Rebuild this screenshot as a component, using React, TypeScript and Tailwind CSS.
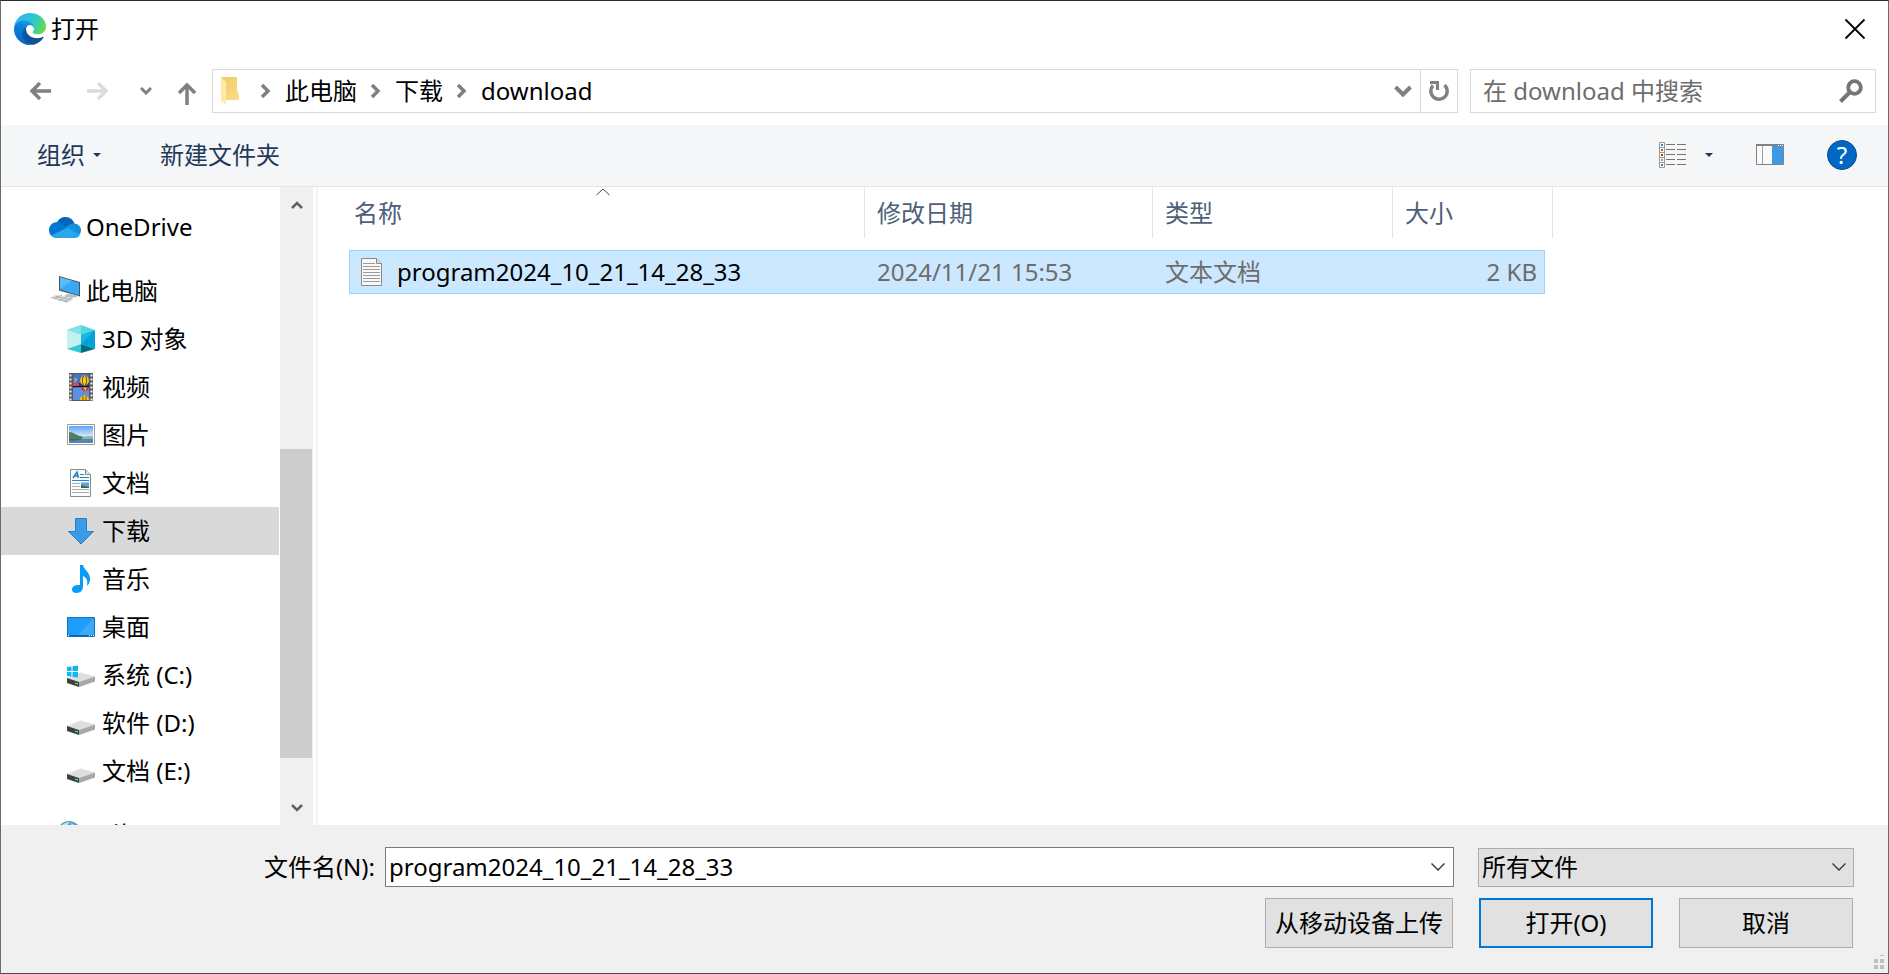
import type { ReactNode } from "react";

function EdgeLogo() {
  return (
    <svg className="size-8" viewBox="0 0 256 256" aria-hidden="true">
      <defs>
        <linearGradient id="edge-navy" x1="60" y1="177" x2="240" y2="177" gradientUnits="userSpaceOnUse">
          <stop offset="0" stopColor="#0c59a4" />
          <stop offset="1" stopColor="#114a8b" />
        </linearGradient>
        <linearGradient id="edge-blue" x1="120" y1="60" x2="50" y2="240" gradientUnits="userSpaceOnUse">
          <stop offset="0" stopColor="#1b9de2" />
          <stop offset="0.4" stopColor="#0b7fdb" />
          <stop offset="1" stopColor="#0667c8" />
        </linearGradient>
        <linearGradient id="edge-green" x1="30" y1="40" x2="240" y2="140" gradientUnits="userSpaceOnUse">
          <stop offset="0" stopColor="#35b5ef" />
          <stop offset="0.45" stopColor="#2ec2dd" />
          <stop offset="0.75" stopColor="#45d28d" />
          <stop offset="1" stopColor="#66dd46" />
        </linearGradient>
      </defs>
      <path
        fill="url(#edge-navy)"
        d="M231.07 190.54c-3.4 1.77-6.9 3.34-10.5 4.7a101.7 101.7 0 0 1-35.92 6.46c-47.34 0-88.58-32.57-88.58-74.34.12-11.41 6.43-21.85 16.46-27.28-42.82 1.8-53.82 46.42-53.82 72.55 0 73.91 68.1 81.4 82.8 81.4 7.9 0 19.84-2.3 27-4.56l1.31-.44a128.34 128.34 0 0 0 66.6-52.8 4 4 0 0 0-5.35-5.69z"
      />
      <path
        fill="url(#edge-blue)"
        d="M105.73 241.42a79.2 79.2 0 0 1-22.74-21.34 80.72 80.72 0 0 1 29.53-120c3.12-1.47 8.45-4.15 15.54-4a32.35 32.35 0 0 1 25.69 13 31.88 31.88 0 0 1 6.36 18.66c0-.2 24.46-79.6-80-79.6-43.9 0-80 41.66-80 78.2-.17 19.3 4 38.4 12.1 56a128 128 0 0 0 156.38 67.11 75.55 75.55 0 0 1-62.78-8z"
      />
      <path
        fill="url(#edge-green)"
        d="M152.33 148.86c-.8 1.05-3.3 2.5-3.3 5.65 0 2.61 1.7 5.12 4.72 7.23 14.38 10 41.49 8.68 41.56 8.68a59.56 59.56 0 0 0 30.27-8.35A61.38 61.38 0 0 0 256 109.19c.26-22.41-8-37.3-11.34-43.9C223.46 23.86 177.72 0 128 0A128 128 0 0 0 0 126.2c.48-36.54 36.8-66.05 80-66.05 3.5 0 23.46.34 42 10.07 16.34 8.58 24.9 18.94 30.85 29.2 6.18 10.67 7.28 24.15 7.28 29.52 0 5.38-2.74 13.36-7.8 19.92z"
      />
    </svg>
  );
}

function Arrow({ className, d }: { className: string; d: string }) {
  return (
    <svg className={className} viewBox="0 0 24 24" fill="none" stroke="currentColor" strokeWidth={3.5} aria-hidden="true">
      <path d={d} />
    </svg>
  );
}

// chevron between the parts of the address
function Crumb() {
  return (
    <svg className="h-4 w-3 text-[#808080]" viewBox="0 0 12 16" fill="none" stroke="currentColor" strokeWidth={3.5} aria-hidden="true">
      <path d="M2 2l6 6-6 6" />
    </svg>
  );
}

function SmallTriangle() {
  return (
    <svg className="h-1 w-2" viewBox="0 0 8 4" aria-hidden="true">
      <path d="M0 0h8L4 4z" fill="#1e395b" />
    </svg>
  );
}

function ThinChevron() {
  return (
    <svg className="h-2 w-3.5" viewBox="0 0 14 8" fill="none" stroke="#404040" strokeWidth={1.5} aria-hidden="true">
      <path d="M0.5 0.5L7 7l6.500-6.500" />
    </svg>
  );
}

function FolderIcon() {
  return (
    <svg className="h-7 w-5" viewBox="0 0 20 28" aria-hidden="true">
      <defs>
        <linearGradient id="folder" x1="0" y1="0" x2="1" y2="1">
          <stop offset="0" stopColor="#efc964" />
          <stop offset="1" stopColor="#fbdf85" />
        </linearGradient>
      </defs>
      <path d="M1 0h16v14l2 3v6H6z" fill="url(#folder)" />
      <path d="M1 0l5 5v22l-5-3z" fill="#ffe9a6" />
    </svg>
  );
}

function OneDriveIcon() {
  return (
    <svg className="size-8" viewBox="0 0 32 32" aria-hidden="true">
      <path d="M8 11.500C10 7.500 13 6 16.500 6c4.500 0 8 3 9 7l-7 4z" fill="#0364b8" />
      <path d="M25 12.500c4 0 7 3 7 6.500 0 2.500-1 4.500-2.500 5.500L15 17l5-3c1.500-1 3-1.500 5-1.500z" fill="#1490df" />
      <path d="M8.500 11C4 11 0 14.500 0 19c0 2.500 1 4.500 2.500 6L19 17.500l-5.500-4.500c-1.500-1.200-3-2-5-2z" fill="#0078d4" />
      <path d="M18.500 16.500L2 24.500C3.500 26.500 5.500 27 8 27h18c2 0 4-1 4.800-3z" fill="#28a8ea" />
    </svg>
  );
}

function ComputerIcon() {
  return (
    <svg className="size-8" viewBox="0 0 32 32" aria-hidden="true">
      <path d="M10 1l21 6v14.500L10 15.500z" fill="#47545f" />
      <path d="M11 2.300l19 5.500v12.400l-19-5.600z" fill="#38a8f5" />
      <path d="M11 2.300l12 3.500-12 8.500z" fill="#5abafa" />
      <path d="M20 18l6 2 3 2-8 1-6-2z" fill="#b9c0c5" />
      <path d="M0 22.500l9-3 16 4-7 4.500z" fill="#dfe2e4" />
      <path d="M3 22.500l16 4.300M6 21l16 4M5 24l8-4M10 25.500l8-4M15 26.800l8-4" stroke="#a0a6aa" strokeWidth={0.800} />
    </svg>
  );
}

function CubeIcon() {
  return (
    <svg className="size-7" viewBox="0 0 28 28" aria-hidden="true">
      <path d="M14 0l14 5-14 5L0 5z" fill="#58d5dd" />
      <path d="M14 0v10L0 5z" fill="#85e2e8" />
      <path d="M0 5l14 5v9L0 24z" fill="#c6f1f3" />
      <path d="M28 5l-14 5v9l14 5z" fill="#00a2de" />
      <path d="M28 5l-14 5v9z" fill="#18b9dc" />
      <path d="M0 24l14-5v9z" fill="#36c7d5" />
      <path d="M28 24l-14-5v9z" fill="#00707f" />
    </svg>
  );
}

function VideoIcon() {
  return (
    <svg className="size-7" viewBox="0 0 28 28" aria-hidden="true">
      <path d="M2 0h24v28H2z" fill="#59595b" />
      <path d="M6 1h16v12H6z" fill="#3f74c4" />
      <path d="M6 14.500h16V27H6z" fill="#5b8fe0" />
      <path d="M6 10h16v3H6z" fill="#20407a" />
      <path d="M3.500 1.500v26M24.500 1.500v26" stroke="#f1f1f1" strokeWidth={2} strokeDasharray="2 2" />
      <ellipse cx="17.500" cy="7.500" rx="4.300" ry="5" fill="#f0cc1c" />
      <path d="M16.500 3c-1.500 3-1.500 6 0 9M18.500 3c1.500 3 1.500 6 0 9" stroke="#7a3a20" fill="none" />
      <path d="M6 11c2-3 4-2 6 0v2H6z" fill="#d94562" />
      <path d="M7 6h3M7 9l3-2" stroke="#f3d54b" />
      <path d="M14 14.500h8c0 2-2 3-4 4-2-1-4-2-4-4z" fill="#d6303c" />
      <path d="M16.500 14.500h3l-1 3.500z" fill="#f3ca28" />
      <path d="M13 27c0-3 2-5 4.500-5s4.500 2 4.500 5z" fill="#f0cc1c" />
      <path d="M16 22.500V27M19 22.500V27" stroke="#7a3a20" />
      <path d="M6 13.500h16" stroke="#141414" />
    </svg>
  );
}

function PictureIcon() {
  return (
    <svg className="size-7" viewBox="0 0 28 28" aria-hidden="true">
      <defs>
        <linearGradient id="sky" x1="0" y1="0" x2="0" y2="1">
          <stop offset="0" stopColor="#5aa2f9" />
          <stop offset="0.600" stopColor="#d2ebf8" />
          <stop offset="1" stopColor="#edf7fa" />
        </linearGradient>
      </defs>
      <path d="M0.500 3.500h27v20H.5z" fill="#fff" stroke="#9c9c9c" />
      <path d="M2 5h24v17H2z" fill="url(#sky)" />
      <path d="M2 11c4 0 7 3 11 4 4 1 6 1 8 3H2z" fill="#527d63" />
      <path d="M15 16.500c4-1.500 7-1.500 11-1v2.500H15z" fill="#8fb0a4" />
      <path d="M2 18h24v4H2z" fill="#5585b4" />
      <path d="M2 18h14l-7 1.500H2z" fill="#346a66" />
    </svg>
  );
}

function DocumentIcon() {
  return (
    <svg className="size-7" viewBox="0 0 28 28" aria-hidden="true">
      <path d="M3.500.5h15l5 5v22h-20z" fill="#fafafa" stroke="#8b8b8b" />
      <path d="M18.500.5v5h5" fill="#e4e4e4" stroke="#8b8b8b" />
      <path d="M6 9l4-6 1.500 6M7.500 7h3" stroke="#1a81c8" strokeWidth={1.500} fill="none" />
      <path d="M13 5.500h4M13 8.500h9M5 11.500h17" stroke="#1a8ad5" />
      <path d="M14 13.500h8v5h-8z" fill="#65a1ca" />
      <path d="M14 16l3 1 5 1v1h-8z" fill="#35674f" />
      <path d="M5 14.500h8M5 17.500h8M5 20.500h17M5 23.500h17" stroke="#adadad" />
    </svg>
  );
}

function DownloadIcon() {
  return (
    <svg className="size-7" viewBox="0 0 28 28" aria-hidden="true">
      <path d="M8.500 1.500h11v13h7L14 27 1.500 14.500h7z" fill="#3c9aea" stroke="#2b7fc9" />
    </svg>
  );
}

function MusicIcon() {
  return (
    <svg className="size-7" viewBox="0 0 28 28" aria-hidden="true">
      <path d="M13 0h3c1 5 7 7 7 14 0 3-1 5-3 7 1-5 0-8-4-10v11c0 3-2.500 6-6.500 6-3 0-4.500-1.500-4.500-3.500 0-3 3-5 8-4.500z" fill="#0a9bf5" />
    </svg>
  );
}

function DesktopIcon() {
  return (
    <svg className="size-7" viewBox="0 0 28 28" aria-hidden="true">
      <path d="M.5 4.500h27v19H.5z" fill="#1e9dfb" stroke="#1671b5" />
      <path d="M27 5v17H11z" fill="#3caafc" />
      <path d="M1 22.500h26" stroke="#0f5f9d" />
      <path d="M1 22.500h1M22 22.500h1M24 22.500h1M26 22.500h1" stroke="#fff" />
    </svg>
  );
}

function DriveIcon({ system = false }: { system?: boolean }) {
  return (
    <svg className="size-7" viewBox="0 0 28 28" aria-hidden="true">
      <path d="M0 17l14-5.500L28 15.500 12 21z" fill="#dcdee0" />
      <path d="M12 21l16-5.500v5L12 26z" fill="#a7a9ac" />
      <path d="M0 17l12 4v5L0 22z" fill="#3c3e40" />
      <path d="M8 22l3 1" stroke="#2fe04b" strokeWidth={1.500} />
      {system && (
        <path d="M0 6l4.500-.6V10H0zM5.500 5.200L11 4.500V10H5.500zM0 11h4.500v4.500L0 15zM5.500 11H11v5.500l-5.500-.8z" fill="#0db7ef" />
      )}
    </svg>
  );
}

function NetworkIcon() {
  return (
    <svg className="size-8" viewBox="0 0 32 32" aria-hidden="true">
      <circle cx="20" cy="14" r="12" fill="#4e9fc4" />
      <path d="M12 7c3-3 6-4 9-4l-4 5-5 3zM22 4l5 3v5l-4-3z" fill="#c4e5ef" />
    </svg>
  );
}

function TextFileIcon() {
  return (
    <svg className="h-7 w-[21px] shrink-0" viewBox="0 0 21 28" aria-hidden="true">
      <path d="M.5.5h15l5 5v22H.5z" fill="#f8f8f8" stroke="#8a8a8a" />
      <path d="M15.500.5v5h5" fill="#dedede" stroke="#8a8a8a" />
      <path d="M2 5.500h12M2 8.500h17M2 11.500h17M2 14.500h17M2 17.500h17M2 20.500h17M2 23.500h17" stroke="#9b9b9b" />
    </svg>
  );
}

function ViewIcon() {
  return (
    <svg className="h-[26px] w-7" viewBox="0 0 28 26" aria-hidden="true">
      <path d="M.5.5h5v25h-5zM.5 5.500h5M.5 10.500h5M.5 15.500h5M.5 20.500h5" fill="#fff" stroke="#999" />
      <path d="M2 2h2v2H2zM2 22h2v2H2z" fill="#3583c7" />
      <path d="M2 7h2v2H2z" fill="#8a7430" />
      <path d="M2 12h2v2H2z" fill="#c52f13" />
      <path d="M2 17h2v2H2z" fill="#70a878" />
      <path d="M7 2.500h9M18 2.500h9M7 7.500h9M18 7.500h9M7 12.500h9M18 12.500h9M7 17.500h9M18 17.500h9M7 22.500h9M18 22.500h9" stroke="#777" />
    </svg>
  );
}

function PreviewIcon() {
  return (
    <svg className="h-[21px] w-7" viewBox="0 0 28 21" aria-hidden="true">
      <path d="M.5.5h27v20H.5z" fill="#fbfbfb" stroke="#7f8387" />
      <path d="M0 1h28" stroke="#7f8387" strokeWidth={2} />
      <path d="M22 1.500h1M24 1.500h1M26 1.500h1" stroke="#fff" />
      <path d="M6.500 2v18" stroke="#9b9fa3" />
      <path d="M16 2h11v18H16z" fill="#3d9be5" />
    </svg>
  );
}

type Place = { label: string; icon: ReactNode; selected?: boolean };

const places: Place[] = [
  { label: "3D 对象", icon: <CubeIcon /> },
  { label: "视频", icon: <VideoIcon /> },
  { label: "图片", icon: <PictureIcon /> },
  { label: "文档", icon: <DocumentIcon /> },
  { label: "下载", icon: <DownloadIcon />, selected: true },
  { label: "音乐", icon: <MusicIcon /> },
  { label: "桌面", icon: <DesktopIcon /> },
  { label: "系统 (C:)", icon: <DriveIcon system /> },
  { label: "软件 (D:)", icon: <DriveIcon /> },
  { label: "文档 (E:)", icon: <DriveIcon /> },
];

function RootPlace({ label, icon }: Place) {
  return (
    <button className="flex h-12 w-full shrink-0 items-center gap-[5px] pb-px pl-12">
      {icon}
      <span>{label}</span>
    </button>
  );
}

function Sidebar() {
  return (
    <nav className="flex w-[279px] flex-col gap-4 overflow-hidden pt-4 pr-px">
      <RootPlace label="OneDrive" icon={<OneDriveIcon />} />
      <div>
        <RootPlace label="此电脑" icon={<ComputerIcon />} />
        {places.map((p) => (
          <button
            key={p.label}
            className={`flex h-12 w-full items-center gap-[7px] pb-px pl-[66px] ${p.selected ? "bg-[#d9d9d9]" : ""}`}
          >
            {p.icon}
            <span>{p.label}</span>
          </button>
        ))}
      </div>
      <RootPlace label="网络" icon={<NetworkIcon />} />
    </nav>
  );
}

function Scrollbar() {
  return (
    <div className="flex w-[33px] flex-col bg-[#f0f0f0] text-[#606060]">
      <button aria-label="向上滚动" className="flex h-9 items-center justify-center">
        <svg className="h-2.5 w-3" viewBox="0 0 12 10" fill="none" stroke="currentColor" strokeWidth={2.500}>
          <path d="M1 8l5-5 5 5" />
        </svg>
      </button>
      <div className="flex-[226]" />
      <div className="mr-px flex-[309] bg-[#cdcdcd]" />
      <div className="flex-[33]" />
      <button aria-label="向下滚动" className="flex h-[34px] items-center justify-center">
        <svg className="h-2.5 w-3" viewBox="0 0 12 10" fill="none" stroke="currentColor" strokeWidth={2.500}>
          <path d="M1 2l5 5 5-5" />
        </svg>
      </button>
    </div>
  );
}

function FileTable() {
  const th = "h-[51px] border-r border-[#e5e5e5] pt-2.5 pl-3";
  const td = "flex h-11 items-center border-y border-[#99d1ff] bg-[#cce8ff] pb-px";
  return (
    <table className="w-[1204px] table-fixed text-left">
      <thead className="text-[#4c607a]">
        <tr>
          <th className="w-[516px] p-0 pb-3 font-normal">
            <div className="relative h-[51px] border-r border-[#e5e5e5] pt-2.5 pl-[5px]">
              名称
              <svg className="absolute top-px left-[247px] h-2 w-3.5" viewBox="0 0 14 8" fill="none" stroke="#444" aria-hidden="true">
                <path d="M0.500 7L7 1l6.500 6" />
              </svg>
            </div>
          </th>
          <th className="w-72 p-0 pb-3 font-normal">
            <div className={th}>修改日期</div>
          </th>
          <th className="w-60 p-0 pb-3 font-normal">
            <div className={th}>类型</div>
          </th>
          <th className="w-40 p-0 pb-3 font-normal">
            <div className={th}>大小</div>
          </th>
        </tr>
      </thead>
      <tbody className="text-[#6d6d6d]">
        <tr>
          <td className="p-0">
            <div className={`${td} gap-[15px] border-l pl-[11px] text-black`}>
              <TextFileIcon />
              <span>program2024_10_21_14_28_33</span>
            </div>
          </td>
          <td className="p-0">
            <div className={`${td} pl-3`}>2024/11/21 15:53</div>
          </td>
          <td className="p-0">
            <div className={`${td} pl-3`}>文本文档</div>
          </td>
          <td className="p-0">
            <div className={`${td} mr-2 justify-end border-r pr-[7px]`}>2 KB</div>
          </td>
        </tr>
      </tbody>
    </table>
  );
}

export default function App() {
  return (
    <div className="flex h-screen flex-col overflow-hidden border border-t-[#2b2640] border-r-[#6b6b6b] border-b-[#4a4a4a] border-l-[#6b6b6b] bg-white font-['Noto_Sans','Noto_Sans_CJK_SC',sans-serif] text-2xl leading-8 text-black">
      <header className="flex h-14 shrink-0 items-center justify-between pr-[22px] pl-[13px]">
        <div className="flex items-center gap-[5px]">
          <EdgeLogo />
          <h1>打开</h1>
        </div>
        <button aria-label="关闭">
          <svg className="size-[22px]" viewBox="0 0 22 22" fill="none" stroke="currentColor" strokeWidth={1.800}>
            <path d="M1.500 1.500l19 19M20.500 1.500l-19 19" />
          </svg>
        </button>
      </header>

      <div className="flex h-[68px] shrink-0 items-center pr-3 pb-px text-[#808080]">
        <div className="flex w-[211px] items-center pl-[27px]">
          <button aria-label="后退">
            <Arrow className="size-6" d="M23 12H4M12 4l-8 8 8 8" />
          </button>
          <button aria-label="前进" className="ml-[34px] text-[#dcdcdc]">
            <Arrow className="size-6" d="M1 12h19M12 4l8 8-8 8" />
          </button>
          <button aria-label="最近浏览的位置" className="ml-[30px]">
            <svg className="h-2 w-3" viewBox="0 0 12 8" fill="none" stroke="currentColor" strokeWidth={3}>
              <path d="M1 1l5 5 5-5" />
            </svg>
          </button>
          <button aria-label="上移" className="mt-1 ml-[23px]">
            <Arrow className="size-6" d="M12 24V4M4 12l8-8 8 8" />
          </button>
        </div>

        <div className="flex h-11 flex-1 items-center border border-[#d9d9d9] pl-[7px] text-black">
          <FolderIcon />
          <div className="ml-5 flex items-center gap-[13px]">
            <Crumb />
            <a href="#pc">此电脑</a>
            <Crumb />
            <a href="#downloads">下载</a>
            <Crumb />
            <a href="#download">download</a>
          </div>
          <button aria-label="以前的位置" className="ml-auto pr-2 text-[#808080]">
            <svg className="h-3 w-[18px]" viewBox="0 0 18 12" fill="none" stroke="currentColor" strokeWidth={4}>
              <path d="M1.500 2L9 9.500 16.500 2" />
            </svg>
          </button>
          <button aria-label="刷新" className="flex h-full w-[37px] items-center justify-center border-l border-[#d9d9d9] text-[#808080]">
            <svg className="h-[22px] w-5" viewBox="0 0 20 22" fill="none" stroke="currentColor" strokeWidth={3.500}>
              <path d="M15.500 5a8.200 8.200 0 1 1-11.500.5" />
              <path d="M1 2.500h7.500V10" strokeWidth={3} />
            </svg>
          </button>
        </div>

        <div className="ml-3 flex h-11 w-[406px] items-center border border-[#d9d9d9] px-3">
          <input
            type="search"
            aria-label="搜索"
            placeholder="在 download 中搜索"
            className="min-w-0 flex-1 outline-none placeholder:text-[#6d6d6d]"
          />
          <svg className="size-6" viewBox="0 0 24 24" fill="none" stroke="#757575" aria-hidden="true">
            <circle cx="15.500" cy="8.500" r="6.300" strokeWidth={3.800} />
            <path d="M11.500 12.500L1.500 22.500" strokeWidth={4} />
          </svg>
        </div>
      </div>

      <div className="flex h-[62px] shrink-0 items-center border-b border-[#e5e5e5] bg-[#f5f6f7] pr-[31px] pb-0.5 pl-9 text-[#1e395b]">
        <button className="flex items-center gap-2">
          组织
          <SmallTriangle />
        </button>
        <button className="ml-[59px]">新建文件夹</button>
        <div className="ml-auto flex items-center">
          <button aria-label="更改视图">
            <ViewIcon />
          </button>
          <button aria-label="更多选项" className="ml-[18px] flex h-6 items-center">
            <SmallTriangle />
          </button>
          <button aria-label="显示预览窗格" className="ml-[43px]">
            <PreviewIcon />
          </button>
          <button
            aria-label="获取帮助"
            className="ml-[43px] flex size-[30px] items-center justify-center rounded-full border border-[#0b4a8b] bg-[#0067c5] text-white"
          >
            ?
          </button>
        </div>
      </div>

      <main className="flex min-h-0 flex-1">
        <Sidebar />
        <Scrollbar />
        <div className="ml-[3px] w-0.5 bg-[#f5f5f5]" />
        <section className="min-w-0 flex-1 overflow-hidden pl-[31px]">
          <FileTable />
        </section>
      </main>

      <footer className="relative h-[148px] shrink-0 bg-[#f0f0f0] pt-[22px] pr-[34px]">
        <div className="flex items-center">
          <label htmlFor="file-name" className="w-[384px] pr-2.5 text-right">
            文件名(N):
          </label>
          <div className="flex h-10 flex-1 items-center border border-[#7a7a7a] bg-white">
            <input
              id="file-name"
              defaultValue="program2024_10_21_14_28_33"
              className="min-w-0 flex-1 pl-[3px] outline-none"
            />
            <button aria-label="文件名列表" className="px-2">
              <ThinChevron />
            </button>
          </div>
          <div className="relative ml-6 w-[376px]">
            <select
              aria-label="文件类型"
              className="h-[39px] w-full appearance-none border border-[#adadad] bg-[#e1e1e1] pl-[3px]"
            >
              <option>所有文件</option>
            </select>
            <div className="pointer-events-none absolute inset-y-0 right-2 flex items-center">
              <ThinChevron />
            </div>
          </div>
        </div>
        <div className="mt-[11px] mr-px flex justify-end gap-[26px]">
          <button className="h-[50px] w-[188px] border border-[#adadad] bg-[#e1e1e1]">从移动设备上传</button>
          <button className="h-[50px] w-[174px] border-2 border-[#0078d7] bg-[#e1e1e1]">打开(O)</button>
          <button className="h-[50px] w-[174px] border border-[#adadad] bg-[#e1e1e1]">取消</button>
        </div>
        <svg className="absolute right-[3px] bottom-1 h-3.5 w-3" viewBox="0 0 12 14" fill="#bfbfbf" aria-hidden="true">
          <path d="M7 0h4v1H7zM1 4h4v4H1zM7 4h4v4H7zM1 10h4v4H1zM7 10h4v4H7z" />
        </svg>
      </footer>
    </div>
  );
}
